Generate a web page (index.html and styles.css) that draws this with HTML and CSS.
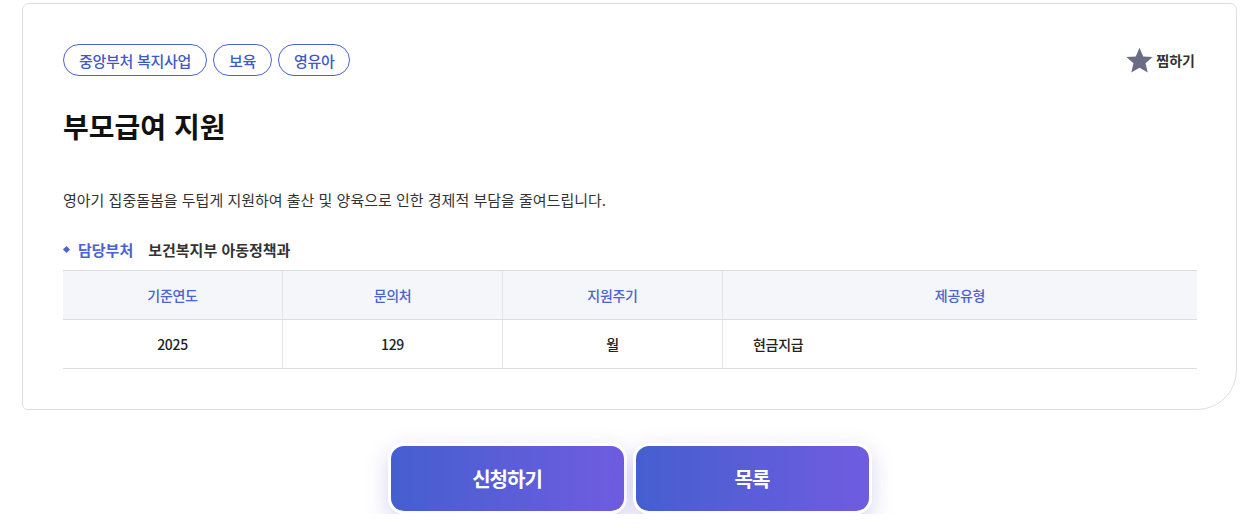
FILE: index.html
```html
<!DOCTYPE html>
<html lang="ko">
<head>
<meta charset="UTF-8">
<meta name="viewport" content="width=device-width, initial-scale=1">
<title>부모급여 지원</title>
<link rel="stylesheet" href="styles.css">
</head>
<body>
  <div class="page">

    <!-- 상세 카드 -->
    <div class="card">
      <div class="card-top">
        <div class="tags">
          <span class="tag">중앙부처 복지사업</span>
          <span class="tag">보육</span>
          <span class="tag">영유아</span>
        </div>
        <button class="fav-btn">
          <svg width="29" height="29" viewBox="0 0 24 24"><path d="M12 1.4l3.1 7.2 7.8.6-5.9 5.1 1.8 7.6L12 17.9 5.2 21.9 7 14.3 1.1 9.2l7.8-.6z" fill="#6b6d85"/></svg>
          <span>찜하기</span>
        </button>
      </div>

      <h1 class="title">부모급여 지원</h1>

      <p class="desc">영아기 집중돌봄을 두텁게 지원하여 출산 및 양육으로 인한 경제적 부담을 줄여드립니다.</p>

      <div class="dept">
        <span class="dept-label">담당부처</span>
        <span class="dept-name">보건복지부 아동정책과</span>
      </div>

      <table class="info-table">
        <thead>
          <tr>
            <th>기준연도</th>
            <th>문의처</th>
            <th>지원주기</th>
            <th>제공유형</th>
          </tr>
        </thead>
        <tbody>
          <tr>
            <td>2025</td>
            <td>129</td>
            <td>월</td>
            <td class="left">현금지급</td>
          </tr>
        </tbody>
      </table>
    </div>

    <!-- 하단 버튼 -->
    <div class="actions">
      <button class="btn">신청하기</button>
      <button class="btn">목록</button>
    </div>

  </div>
</body>
</html>
```

FILE: styles.css
```css
body {
  margin: 0;
  background: #fff;
  color: #222;
  font-family: "Noto Sans CJK KR", "Noto Sans", sans-serif;
}

.page {
  padding: 3px 10px 0 22px;
}

.card {
  border: 1px solid #dedee2;
  border-radius: 7px 7px 40px 5px;
  padding: 40px 39px 40px 40px;
}

.card-top {
  display: flex;
  justify-content: space-between;
  align-items: center;
  height: 32px;
}

.tags {
  display: flex;
  gap: 6px;
}

.tag {
  display: flex;
  align-items: center;
  height: 30px;
  padding: 0 15px;
  border: 1px solid #4a62d3;
  border-radius: 16px;
  color: #3f58c9;
  font-size: 15px;
  font-weight: 500;
  letter-spacing: -0.3px;
}

.fav-btn {
  display: flex;
  align-items: center;
  gap: 2px;
  padding: 0;
  margin-right: 2px;
  border: none;
  background: none;
  font-family: inherit;
  font-size: 14px;
  font-weight: 700;
  color: #333;
  cursor: pointer;
}

.title {
  margin: 32px 0 0;
  font-size: 28px;
  line-height: 36px;
  font-weight: 700;
  color: #111;
}

.desc {
  margin: 44px 0 0;
  font-size: 15px;
  line-height: 24px;
  color: #333;
}

.dept {
  display: flex;
  align-items: center;
  gap: 15px;
  margin-top: 26px;
  height: 22px;
  font-size: 15px;
  font-weight: 700;
}

.dept-label {
  display: flex;
  align-items: center;
  gap: 9px;
  color: #4a62d3;
}

.dept-label::before {
  content: "";
  width: 5px;
  height: 5px;
  margin-left: 1px;
  background: #4a62d3;
  transform: rotate(45deg);
}

.dept-name {
  color: #333;
}

.info-table {
  width: 100%;
  margin-top: 10px;
  border-collapse: collapse;
  font-size: 14px;
  letter-spacing: -0.3px;
}

.info-table th,
.info-table td {
  height: 48px;
  padding: 0;
  text-align: center;
  border-top: 1px solid #dcdde3;
  border-bottom: 1px solid #dcdde3;
  border-left: 1px solid #e3e3e8;
}

.info-table th:first-child,
.info-table td:first-child {
  border-left: none;
}

.info-table th:nth-child(-n+3),
.info-table td:nth-child(-n+3) {
  width: 219px;
}

.info-table th {
  background: #f5f6fa;
  color: #4a62d3;
  font-weight: 500;
}

.info-table td {
  color: #222;
  font-weight: 500;
}

.info-table td.left {
  text-align: left;
  padding-left: 30px;
}

.actions {
  display: flex;
  justify-content: center;
  gap: 6px;
  margin-top: 33px;
}

.btn {
  width: 239px;
  height: 71px;
  border: 3px solid #fff;
  border-radius: 16px;
  background: linear-gradient(90deg, #455fcf, #705ce0);
  box-shadow: 0 8px 22px rgba(90, 84, 200, 0.25);
  color: #fff;
  font-family: inherit;
  font-size: 20px;
  font-weight: 700;
  letter-spacing: -1px;
  cursor: pointer;
}
```
